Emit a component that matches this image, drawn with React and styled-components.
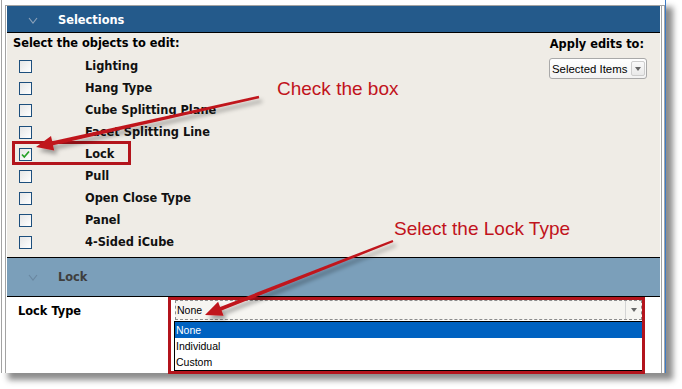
import React from 'react'
import styled, { createGlobalStyle } from 'styled-components'

const GlobalStyle = createGlobalStyle`
  html, body {
    margin: 0;
    padding: 0;
    background: #fff;
  }
  body {
    position: relative;
    width: 682px;
    height: 389px;
    overflow: hidden;
    font-family: "DejaVu Sans", Verdana, sans-serif;
  }
`

const objects = [
  'Lighting',
  'Hang Type',
  'Cube Splitting Plane',
  'Facet Splitting Line',
  'Lock',
  'Pull',
  'Open Close Type',
  'Panel',
  '4-Sided iCube',
]

const lockTypes = ['None', 'Individual', 'Custom']

const Window = styled.div`
  box-sizing: border-box;
  margin-left: 1px;
  width: 665px;
  height: 373px;
  padding: 5px 0 0 3px;
  background: #fff;
  border-left: 1px solid #a3a3a3;
  border-right: 1px solid #3c7bc6;
  box-shadow: 7px 7px 6px rgba(0, 0, 0, 0.45);
`

const Frame = styled.div`
  box-sizing: border-box;
  height: 100%;
  border: 1px solid #a3a3a3;
  border-bottom: none;
  padding: 0 2px 0 1px;
  display: flex;
`

const Panel = styled.div`
  flex: 1;
  display: flex;
  flex-direction: column;
  border-right: 1px solid #a3a3a3;
  padding-right: 1px;
`

const SectionHeader = styled.div`
  flex: none;
  display: flex;
  align-items: center;
  gap: 20px;
  height: ${p => (p.$muted ? 38 : 24)}px;
  padding-top: ${p => (p.$muted ? 0 : 2)}px;
  padding-left: 21px;
  background: ${p => (p.$muted ? '#7b9fba' : '#245a8b')};
  border-top: ${p => (p.$muted ? '1px solid #000' : 'none')};
  border-bottom: 1px solid #000;
`

const HeaderTitle = styled.span`
  font-size: 11.4px;
  font-weight: bold;
  color: ${p => (p.$muted ? '#3e3e3e' : '#fff')};
`

const Body = styled.div`
  flex: none;
  display: flex;
  justify-content: space-between;
  padding: 2px 13px 4px 6px;
  background: #efece6;
`

const Column = styled.div`
  display: flex;
  flex-direction: column;
  align-items: ${p => (p.$right ? 'flex-end' : 'flex-start')};
`

const Heading = styled.div`
  font-size: 11.4px;
  font-weight: bold;
  line-height: 17px;
  color: #000;
  white-space: nowrap;
  padding: ${p => (p.$right ? '1px 3px 0 0' : '0')};
`

const List = styled.div`
  margin-top: 3px;
`

const Row = styled.div`
  display: flex;
  align-items: center;
  height: 22px;
`

const Box = styled.span`
  box-sizing: border-box;
  width: 13px;
  height: 13px;
  margin-left: 6px;
  border: 1px solid #1d4f7d;
  background: linear-gradient(135deg, #e6e6e6, #fff);
  display: flex;
  align-items: center;
  justify-content: center;
`

const Label = styled.span`
  margin-left: 53px;
  font-size: 11.4px;
  font-weight: bold;
  color: #111;
  white-space: nowrap;
`

const SmallSelect = styled.div`
  box-sizing: border-box;
  flex: none;
  margin-top: 5px;
  width: 98px;
  height: 21px;
  display: flex;
  align-items: center;
  padding: 0 1px 0 2px;
  border: 1px solid #a9a9a9;
  border-radius: 3px;
  background: linear-gradient(#fff, #f2f2f2);
  font: 11.4px "Liberation Sans", Tahoma, sans-serif;
  color: #000;
  white-space: nowrap;
`

const DropButton = styled.span`
  box-sizing: border-box;
  flex: none;
  margin-left: auto;
  width: 14px;
  height: 15px;
  border: 1px solid #cdcdcd;
  border-radius: 2px;
  background: linear-gradient(#fafafa, #e9e9e9);
  display: flex;
  align-items: center;
  justify-content: center;
`

const Caret = styled.span`
  width: 0;
  height: 0;
  border-left: 3.5px solid transparent;
  border-right: 3.5px solid transparent;
  border-top: 4px solid #666;
`

const Lower = styled.div`
  flex: 1;
  display: flex;
  padding: 3px 0 0 11px;
  background: #fff;
`

const FieldLabel = styled.div`
  width: 157px;
  padding-top: 1px;
  line-height: 20px;
  font-size: 11.4px;
  font-weight: bold;
  color: #000;
`

const Field = styled.div`
  width: 467px;
  display: flex;
  flex-direction: column;
`

const LockSelect = styled.div`
  box-sizing: border-box;
  height: 20px;
  display: flex;
  align-items: center;
  padding-left: 1px;
  border: 1px dashed #8c8c8c;
  background: #f6f5f1;
  font: 10.5px "Liberation Sans", Tahoma, sans-serif;
  color: #000;
`

const SelectArrow = styled.span`
  margin-left: auto;
  width: 15px;
  height: 100%;
  border-left: 1px solid #d4d4d4;
  display: flex;
  align-items: center;
  justify-content: center;
`

const Options = styled.div`
  margin: 1px -1px 0;
  border: 1px solid #000;
  background: #fff;
`

const Option = styled.div`
  height: 16px;
  padding-left: 1px;
  font: 10.5px/16px "Liberation Sans", Tahoma, sans-serif;
  color: ${p => (p.$selected ? '#fff' : '#000')};
  background: ${p => (p.$selected ? '#0062c1' : 'transparent')};
`

const Overlay = styled.svg`
  position: absolute;
  left: 0;
  top: 0;
  pointer-events: none;
`

const Callout = styled.span`
  position: absolute;
  left: ${p => p.$x}px;
  top: ${p => p.$y}px;
  font: 19px/22px "Liberation Sans", Arial, sans-serif;
  color: #c1131c;
  white-space: nowrap;
`

const Chevron = ({ color }) => (
  <svg width="10" height="7" viewBox="0 0 10 7">
    <polyline points="1,1 5,6 9,1" fill="none" stroke={color} strokeWidth="1.1" />
  </svg>
)

const Check = () => (
  <svg width="11" height="11" viewBox="0 0 11 11">
    <path d="M2 5.5 L4.3 8 L9 2.5" fill="none" stroke="#27a127" strokeWidth="1.7" />
  </svg>
)

const App = () => (
  <>
    <GlobalStyle />
    <Window>
      <Frame>
        <Panel>
          <SectionHeader>
            <Chevron color="#8ea3ba" />
            <HeaderTitle>Selections</HeaderTitle>
          </SectionHeader>
          <Body>
            <Column>
              <Heading>Select the objects to edit:</Heading>
              <List>
                {objects.map(name => (
                  <Row key={name}>
                    <Box>{name === 'Lock' && <Check />}</Box>
                    <Label>{name}</Label>
                  </Row>
                ))}
              </List>
            </Column>
            <Column $right>
              <Heading $right>Apply edits to:</Heading>
              <SmallSelect>
                Selected Items
                <DropButton>
                  <Caret />
                </DropButton>
              </SmallSelect>
            </Column>
          </Body>
          <SectionHeader $muted>
            <Chevron color="#6a87a0" />
            <HeaderTitle $muted>Lock</HeaderTitle>
          </SectionHeader>
          <Lower>
            <FieldLabel>Lock Type</FieldLabel>
            <Field>
              <LockSelect>
                None
                <SelectArrow>
                  <Caret />
                </SelectArrow>
              </LockSelect>
              <Options>
                {lockTypes.map((t, i) => (
                  <Option key={t} $selected={i === 0}>{t}</Option>
                ))}
              </Options>
            </Field>
          </Lower>
        </Panel>
      </Frame>
    </Window>

    <Overlay width="682" height="389" viewBox="0 0 682 389">
      <defs>
        <filter id="shade" x="-10%" y="-10%" width="130%" height="140%">
          <feDropShadow dx="3" dy="4" stdDeviation="2" floodColor="#000" floodOpacity="0.35" />
        </filter>
      </defs>
      <rect x="13.5" y="142.5" width="116" height="21" fill="none" stroke="#b3141c" strokeWidth="3" />
      <rect x="169.5" y="298.5" width="474" height="74" fill="none" stroke="#b3141c" strokeWidth="3" />
      <g filter="url(#shade)" fill="#c0161e">
        <polygon points="258.7,95.8 52.2,141.3 51,136 36,147 54.2,150.6 53,145.2 259.3,98.2" />
        <polygon points="392.6,239.9 220.1,306.9 218.1,301.8 205,315 223.6,315.8 221.6,310.6 393.4,242.1" />
      </g>
    </Overlay>
    <Callout $x={277} $y={78}>Check the box</Callout>
    <Callout $x={394} $y={218}>Select the Lock Type</Callout>
  </>
)

export default App
